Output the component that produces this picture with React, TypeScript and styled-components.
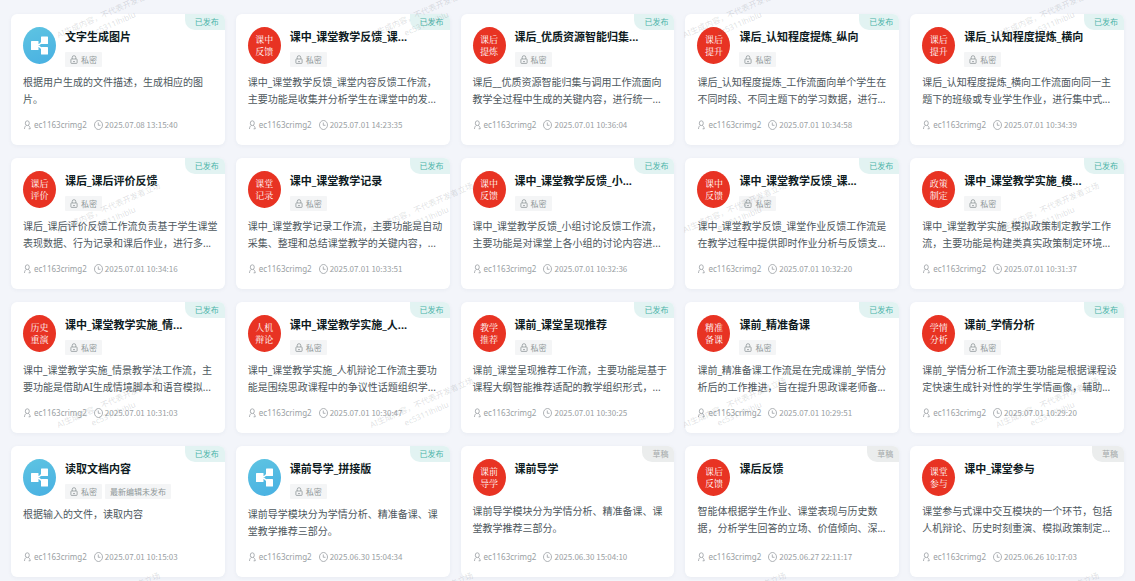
import React from "react";
import styled, { createGlobalStyle } from "styled-components";

const GlobalStyle = createGlobalStyle`
  * { box-sizing: border-box; }
  body {
    margin: 0;
    background: #f3f5fa;
    font-family: "Noto Sans", "Noto Sans CJK SC", sans-serif;
  }
`;

const Page = styled.main`
  position: relative;
  overflow: hidden;
  padding: 14px 11px 4px;
`;

const CardGrid = styled.div`
  display: grid;
  grid-template-columns: repeat(5, minmax(0, 1fr));
  gap: 13px 11px;
`;

const Card = styled.article`
  position: relative;
  display: flex;
  flex-direction: column;
  min-height: 131px;
  padding: 13px 12px 12px;
  border-radius: 6px;
  background: #fff;
  box-shadow: 0 1px 4px rgba(30, 50, 90, 0.05);
`;

const Status = styled.span<{ $draft: boolean }>`
  position: absolute;
  top: 0;
  right: 0;
  height: 16px;
  padding: 0 6px 0 10px;
  border-radius: 0 6px 0 10px;
  font-size: 8px;
  line-height: 16px;
  color: ${(p) => (p.$draft ? "#a3a8a9" : "#4cb3a9")};
  background: ${(p) => (p.$draft ? "#ebeded" : "#e2f3f2")};
`;

const Header = styled.header<{ $tagged: boolean }>`
  display: flex;
  gap: 9px;
  min-height: ${(p) => (p.$tagged ? 47 : 44)}px;
`;

const Avatar = styled.div<{ $flow?: boolean }>`
  display: flex;
  flex: none;
  flex-direction: column;
  align-items: center;
  justify-content: center;
  width: 33px;
  height: 37px;
  border-radius: 50%;
  color: #fff;
  font-family: "Noto Serif CJK SC", "Noto Sans CJK SC", serif;
  font-size: 9px;
  line-height: 12px;
  background: ${(p) => (p.$flow ? "linear-gradient(160deg, #5ec4e2, #48b0e2)" : "#e83323")};
`;

const Heading = styled.div`
  flex: 1;
  min-width: 0;
`;

const Title = styled.h2`
  margin: 2px 0 7px;
  font-size: 11px;
  font-weight: 700;
  line-height: 16px;
  color: #0e1b22;
  white-space: nowrap;
`;

const Tags = styled.div`
  display: flex;
  gap: 3px;
`;

const Tag = styled.span`
  display: flex;
  align-items: center;
  gap: 3px;
  height: 15px;
  padding: 0 5px;
  border-radius: 1px;
  font-size: 8px;
  line-height: 15px;
  color: #8f9799;
  background: #f4f5f6;
`;

const Description = styled.p`
  margin: 0;
  font-size: 10px;
  line-height: 17px;
  color: #4d575d;
  white-space: pre;
`;

const Meta = styled.footer`
  display: flex;
  align-items: center;
  gap: 7px;
  margin-top: auto;
  font-size: 8px;
  line-height: 16px;
  color: #9aa0a3;
`;

const MetaItem = styled.span`
  display: flex;
  align-items: center;
  gap: 2px;
`;

const Time = styled.time`
  font-family: "Noto Sans CJK SC", sans-serif;
`;

const WatermarkLayer = styled.div`
  position: absolute;
  inset: -80px -160px -80px -46px;
  display: grid;
  grid-template-columns: repeat(auto-fill, 313px);
  grid-auto-rows: 195px;
  overflow: hidden;
  pointer-events: none;
`;

const Watermark = styled.div`
  display: flex;
  align-items: center;
  justify-content: center;
  font-size: 8px;
  line-height: 12px;
  text-align: center;
  color: rgba(90, 100, 110, 0.2);
`;

const WatermarkText = styled.div`
  transform: rotate(-24deg);
`;

const LockIcon = () => (
  <svg width="8" height="9" viewBox="0 0 8 9" fill="none" stroke="currentColor" strokeWidth="0.8" aria-hidden="true">
    <rect x="0.9" y="4" width="6.2" height="4.4" rx="0.6" />
    <path d="M2.2 4V2.5a1.8 1.8 0 0 1 3.6 0V4M3 6.6h2" />
  </svg>
);

const UserIcon = () => (
  <svg width="9" height="10" viewBox="0 0 9 10" fill="none" stroke="currentColor" strokeWidth="0.8" aria-hidden="true">
    <ellipse cx="4.3" cy="3.2" rx="2" ry="2.4" />
    <path d="M1.5 9c0-2 .9-3.2 2-3.6M5.2 5.4C6.400 5.900 7.100 7 7.200 9M5.600 8.800h1.600" />
  </svg>
);

const ClockIcon = () => (
  <svg width="9" height="10" viewBox="0 0 9 10" fill="none" stroke="currentColor" strokeWidth="0.8" aria-hidden="true">
    <ellipse cx="4.500" cy="5" rx="4" ry="4.500" />
    <path d="M4.300 2.500v2.800h2.200" />
  </svg>
);

const FlowIcon = () => (
  <svg width="33" height="37" viewBox="0 0 33 37" fill="#fff" aria-hidden="true">
    <rect x="8" y="14" width="7.500" height="9" rx="0.600" />
    <rect x="18" y="9.500" width="7" height="7.500" rx="0.600" />
    <rect x="18" y="20" width="7" height="7.500" rx="0.600" />
    <path d="M15 17.700h1.200l2.600-2.500M15 19.400h1.200l2.600 2.300" fill="none" stroke="#fff" strokeWidth="1.300" />
  </svg>
);

interface Workflow {
  title: string;
  icon?: [string, string];
  text: string;
  time: string;
  draft?: boolean;
  edited?: boolean;
}

const workflows: Workflow[] = [
  { title: "文字生成图片", text: "根据用户生成的文件描述，生成相应的图\n片。", time: "2025.07.08 13:15:40" },
  { title: "课中_课堂教学反馈_课...", icon: ["课中", "反馈"], text: "课中_课堂教学反馈_课堂内容反馈工作流，\n主要功能是收集并分析学生在课堂中的发...", time: "2025.07.01 14:23:35" },
  { title: "课后_优质资源智能归集...", icon: ["课后", "提炼"], text: "课后__优质资源智能归集与调用工作流面向\n教学全过程中生成的关键内容，进行统一...", time: "2025.07.01 10:36:04" },
  { title: "课后_认知程度提炼_纵向", icon: ["课后", "提升"], text: "课后_认知程度提炼_工作流面向单个学生在\n不同时段、不同主题下的学习数据，进行...", time: "2025.07.01 10:34:58" },
  { title: "课后_认知程度提炼_横向", icon: ["课后", "提升"], text: "课后_认知程度提炼_横向工作流面向同一主\n题下的班级或专业学生作业，进行集中式...", time: "2025.07.01 10:34:39" },
  { title: "课后_课后评价反馈", icon: ["课后", "评价"], text: "课后_课后评价反馈工作流负责基于学生课堂\n表现数据、行为记录和课后作业，进行多...", time: "2025.07.01 10:34:16" },
  { title: "课中_课堂教学记录", icon: ["课堂", "记录"], text: "课中_课堂教学记录工作流，主要功能是自动\n采集、整理和总结课堂教学的关键内容，...", time: "2025.07.01 10:33:51" },
  { title: "课中_课堂教学反馈_小...", icon: ["课中", "反馈"], text: "课中_课堂教学反馈_小组讨论反馈工作流，\n主要功能是对课堂上各小组的讨论内容进...", time: "2025.07.01 10:32:36" },
  { title: "课中_课堂教学反馈_课...", icon: ["课中", "反馈"], text: "课中_课堂教学反馈_课堂作业反馈工作流是\n在教学过程中提供即时作业分析与反馈支...", time: "2025.07.01 10:32:20" },
  { title: "课中_课堂教学实施_模...", icon: ["政策", "制定"], text: "课中_课堂教学实施_模拟政策制定教学工作\n流，主要功能是构建类真实政策制定环境...", time: "2025.07.01 10:31:37" },
  { title: "课中_课堂教学实施_情...", icon: ["历史", "重演"], text: "课中_课堂教学实施_情景教学法工作流，主\n要功能是借助AI生成情境脚本和语音模拟...", time: "2025.07.01 10:31:03" },
  { title: "课中_课堂教学实施_人...", icon: ["人机", "辩论"], text: "课中_课堂教学实施_人机辩论工作流主要功\n能是围绕思政课程中的争议性话题组织学...", time: "2025.07.01 10:30:47" },
  { title: "课前_课堂呈现推荐", icon: ["教学", "推荐"], text: "课前_课堂呈现推荐工作流，主要功能是基于\n课程大纲智能推荐适配的教学组织形式，...", time: "2025.07.01 10:30:25" },
  { title: "课前_精准备课", icon: ["精准", "备课"], text: "课前_精准备课工作流是在完成课前_学情分\n析后的工作推进，旨在提升思政课老师备...", time: "2025.07.01 10:29:51" },
  { title: "课前_学情分析", icon: ["学情", "分析"], text: "课前_学情分析工作流主要功能是根据课程设\n定快速生成针对性的学生学情画像，辅助...", time: "2025.07.01 10:29:20" },
  { title: "读取文档内容", text: "根据输入的文件，读取内容", time: "2025.07.01 10:15:03", edited: true },
  { title: "课前导学_拼接版", text: "课前导学模块分为学情分析、精准备课、课\n堂教学推荐三部分。", time: "2025.06.30 15:04:34" },
  { title: "课前导学", icon: ["课前", "导学"], text: "课前导学模块分为学情分析、精准备课、课\n堂教学推荐三部分。", time: "2025.06.30 15:04:10", draft: true },
  { title: "课后反馈", icon: ["课后", "反馈"], text: "智能体根据学生作业、课堂表现与历史数\n据，分析学生回答的立场、价值倾向、深...", time: "2025.06.27 22:11:17", draft: true },
  { title: "课中_课堂参与", icon: ["课堂", "参与"], text: "课堂参与式课中交互模块的一个环节，包括\n人机辩论、历史时刻重演、模拟政策制定...", time: "2025.06.26 10:17:03", draft: true },
];

const WorkflowCard = ({ title, icon, text, time, draft = false, edited }: Workflow) => (
  <Card>
    <Status $draft={draft}>{draft ? "草稿" : "已发布"}</Status>
    <Header $tagged={!draft}>
      {icon ? (
        <Avatar>
          <span>{icon[0]}</span>
          <span>{icon[1]}</span>
        </Avatar>
      ) : (
        <Avatar $flow>
          <FlowIcon />
        </Avatar>
      )}
      <Heading>
        <Title>{title}</Title>
        {!draft && (
          <Tags>
            <Tag>
              <LockIcon />
              私密
            </Tag>
            {edited && <Tag>最新编辑未发布</Tag>}
          </Tags>
        )}
      </Heading>
    </Header>
    <Description>{text}</Description>
    <Meta>
      <MetaItem>
        <UserIcon />
        ec1163crimg2
      </MetaItem>
      <MetaItem>
        <ClockIcon />
        <Time>{time}</Time>
      </MetaItem>
    </Meta>
  </Card>
);

export default function App() {
  return (
    <>
      <GlobalStyle />
      <Page>
        <CardGrid>
          {workflows.map((workflow, index) => (
            <WorkflowCard key={index} {...workflow} />
          ))}
        </CardGrid>
        <WatermarkLayer aria-hidden="true">
          {Array.from({ length: 16 }, (_, index) => (
            <Watermark key={index}>
              <WatermarkText>
                AI生成内容，不代表开发者立场
                <br />
                ec5311lhiblu
              </WatermarkText>
            </Watermark>
          ))}
        </WatermarkLayer>
      </Page>
    </>
  );
}
